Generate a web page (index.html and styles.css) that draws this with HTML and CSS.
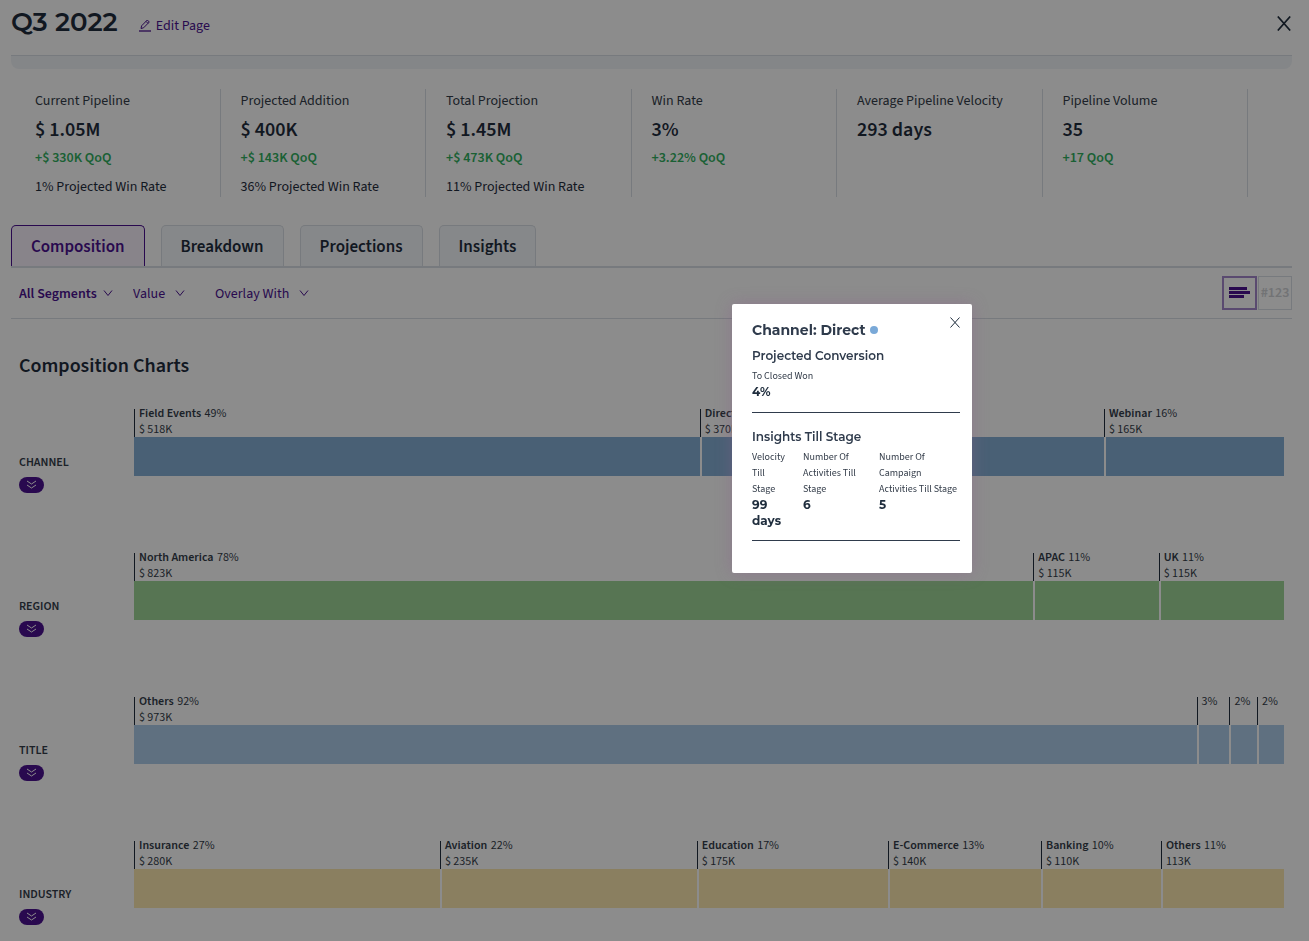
FILE: index.html
```html
<!DOCTYPE html>
<html lang="en">
<head>
    <meta charset="UTF-8">
    <meta name="viewport" content="width=device-width, initial-scale=1.0">
    <title>Q3 2022</title>
    <link rel="stylesheet" href="styles.css">
</head>
<body>
    <div class="page">
        <header class="page-header">
            <h1>Q3 2022</h1>
            <a href="#" class="edit-link">
                <svg width="12" height="13" viewBox="0 0 12 13" fill="none" stroke="currentColor">
                    <path d="M2 9.5l.6-2.7L8.3 1l2 2-5.7 5.8L2 9.5zM7 2.400l2 2"/>
                    <path d="M0 12h12" stroke-width="1.300"/>
                </svg>
                Edit Page
            </a>
            <button type="button" class="close-btn page-close" aria-label="Close page">
                <svg width="14" height="15" viewBox="0 0 14 15" fill="none" stroke="currentColor" stroke-width="1.700"><path d="M.8.5l12.4 14M13.200.5L.8 14.500"/></svg>
            </button>
        </header>
        <div class="header-strip"></div>

        <section class="stats">
            <div class="stat">
                <p class="stat-label">Current Pipeline</p>
                <p class="stat-value">$ 1.05M</p>
                <p class="stat-change">+$ 330K QoQ</p>
                <p class="stat-note">1% Projected Win Rate</p>
            </div>
            <div class="stat">
                <p class="stat-label">Projected Addition</p>
                <p class="stat-value">$ 400K</p>
                <p class="stat-change">+$ 143K QoQ</p>
                <p class="stat-note">36% Projected Win Rate</p>
            </div>
            <div class="stat">
                <p class="stat-label">Total Projection</p>
                <p class="stat-value">$ 1.45M</p>
                <p class="stat-change">+$ 473K QoQ</p>
                <p class="stat-note">11% Projected Win Rate</p>
            </div>
            <div class="stat">
                <p class="stat-label">Win Rate</p>
                <p class="stat-value">3%</p>
                <p class="stat-change">+3.22% QoQ</p>
            </div>
            <div class="stat">
                <p class="stat-label">Average Pipeline Velocity</p>
                <p class="stat-value">293 days</p>
            </div>
            <div class="stat">
                <p class="stat-label">Pipeline Volume</p>
                <p class="stat-value">35</p>
                <p class="stat-change">+17 QoQ</p>
            </div>
        </section>

        <nav class="tabs">
            <button type="button" class="tab active">Composition</button>
            <button type="button" class="tab">Breakdown</button>
            <button type="button" class="tab">Projections</button>
            <button type="button" class="tab">Insights</button>
        </nav>

        <div class="filters">
            <div class="filter filter-main">
                <select aria-label="Segments"><option>All Segments</option></select>
                <svg class="chevron" width="10" height="7" viewBox="0 0 10 7"><path d="M1 .5l4 5 4-5"/></svg>
            </div>
            <div class="filter">
                <select aria-label="Measure"><option>Value</option></select>
                <svg class="chevron" width="10" height="7" viewBox="0 0 10 7"><path d="M1 .5l4 5 4-5"/></svg>
            </div>
            <div class="filter">
                <select aria-label="Overlay"><option>Overlay With</option></select>
                <svg class="chevron" width="10" height="7" viewBox="0 0 10 7"><path d="M1 .5l4 5 4-5"/></svg>
            </div>
            <div class="view-toggle">
                <button type="button" class="toggle-btn selected" aria-label="Bars">
                    <svg width="21" height="12" viewBox="0 0 21 12" fill="currentColor"><path d="M0 0h18v3H0zM0 4h21v3H0zM0 8h15v3H0z"/></svg>
                </button>
                <button type="button" class="toggle-btn">#123</button>
            </div>
        </div>

        <main class="charts">
            <h2>Composition Charts</h2>

            <section class="chart-row channel">
                <div class="chart-side">
                    <h3>CHANNEL</h3>
                    <button type="button" class="expand-btn" aria-label="Expand channel">
                        <svg width="11" height="10" viewBox="0 0 11 10"><path d="M1 1l4.500 3L10 1M1 5l4.500 3L10 5"/></svg>
                    </button>
                </div>
                <div class="chart">
                    <div class="segment" style="width: 49.2%">
                        <div class="segment-label"><b>Field Events</b> 49%<br>$ 518K</div>
                        <div class="bar"></div>
                    </div>
                    <div class="segment" style="width: 35.14%">
                        <div class="segment-label"><b>Direct</b> 35%<br>$ 370K</div>
                        <div class="bar"></div>
                    </div>
                    <div class="segment" style="width: 15.66%">
                        <div class="segment-label"><b>Webinar</b> 16%<br>$ 165K</div>
                        <div class="bar"></div>
                    </div>
                </div>
            </section>

            <section class="chart-row region">
                <div class="chart-side">
                    <h3>REGION</h3>
                    <button type="button" class="expand-btn" aria-label="Expand region">
                        <svg width="11" height="10" viewBox="0 0 11 10"><path d="M1 1l4.500 3L10 1M1 5l4.500 3L10 5"/></svg>
                    </button>
                </div>
                <div class="chart">
                    <div class="segment" style="width: 78.2%">
                        <div class="segment-label"><b>North America</b> 78%<br>$ 823K</div>
                        <div class="bar"></div>
                    </div>
                    <div class="segment" style="width: 10.9%">
                        <div class="segment-label"><b>APAC</b> 11%<br>$ 115K</div>
                        <div class="bar"></div>
                    </div>
                    <div class="segment" style="width: 10.9%">
                        <div class="segment-label"><b>UK</b> 11%<br>$ 115K</div>
                        <div class="bar"></div>
                    </div>
                </div>
            </section>

            <section class="chart-row title">
                <div class="chart-side">
                    <h3>TITLE</h3>
                    <button type="button" class="expand-btn" aria-label="Expand title">
                        <svg width="11" height="10" viewBox="0 0 11 10"><path d="M1 1l4.500 3L10 1M1 5l4.500 3L10 5"/></svg>
                    </button>
                </div>
                <div class="chart">
                    <div class="segment" style="width: 92.4%">
                        <div class="segment-label"><b>Others</b> 92%<br>$ 973K</div>
                        <div class="bar"></div>
                    </div>
                    <div class="segment" style="width: 2.86%">
                        <div class="segment-label">3%</div>
                        <div class="bar"></div>
                    </div>
                    <div class="segment" style="width: 2.4%">
                        <div class="segment-label">2%</div>
                        <div class="bar"></div>
                    </div>
                    <div class="segment" style="width: 2.34%">
                        <div class="segment-label">2%</div>
                        <div class="bar"></div>
                    </div>
                </div>
            </section>

            <section class="chart-row industry">
                <div class="chart-side">
                    <h3>INDUSTRY</h3>
                    <button type="button" class="expand-btn" aria-label="Expand industry">
                        <svg width="11" height="10" viewBox="0 0 11 10"><path d="M1 1l4.500 3L10 1M1 5l4.500 3L10 5"/></svg>
                    </button>
                </div>
                <div class="chart">
                    <div class="segment" style="width: 26.6%">
                        <div class="segment-label"><b>Insurance</b> 27%<br>$ 280K</div>
                        <div class="bar"></div>
                    </div>
                    <div class="segment" style="width: 22.34%">
                        <div class="segment-label"><b>Aviation</b> 22%<br>$ 235K</div>
                        <div class="bar"></div>
                    </div>
                    <div class="segment" style="width: 16.63%">
                        <div class="segment-label"><b>Education</b> 17%<br>$ 175K</div>
                        <div class="bar"></div>
                    </div>
                    <div class="segment" style="width: 13.3%">
                        <div class="segment-label"><b>E-Commerce</b> 13%<br>$ 140K</div>
                        <div class="bar"></div>
                    </div>
                    <div class="segment" style="width: 10.43%">
                        <div class="segment-label"><b>Banking</b> 10%<br>$ 110K</div>
                        <div class="bar"></div>
                    </div>
                    <div class="segment" style="width: 10.7%">
                        <div class="segment-label"><b>Others</b> 11%<br>113K</div>
                        <div class="bar"></div>
                    </div>
                </div>
            </section>
        </main>
    </div>

    <div class="overlay"></div>

    <div class="modal" role="dialog" aria-labelledby="modalTitle">
        <button type="button" class="close-btn modal-close" aria-label="Close">
            <svg width="10" height="11" viewBox="0 0 10 11" fill="none" stroke="currentColor"><path d="M.5.5l9 10M9.500.5l-9 10"/></svg>
        </button>
        <h2 id="modalTitle">Channel: Direct <span class="dot"></span></h2>
        <section class="modal-section">
            <h3>Projected Conversion</h3>
            <p class="metric-label">To Closed Won</p>
            <p class="metric-value">4%</p>
        </section>
        <section class="modal-section">
            <h3>Insights Till Stage</h3>
            <div class="metrics">
                <div>
                    <p class="metric-label">Velocity Till Stage</p>
                    <p class="metric-value">99 days</p>
                </div>
                <div>
                    <p class="metric-label">Number Of Activities Till Stage</p>
                    <p class="metric-value">6</p>
                </div>
                <div>
                    <p class="metric-label">Number Of Campaign Activities Till Stage</p>
                    <p class="metric-value">5</p>
                </div>
            </div>
        </section>
    </div>
</body>
</html>
```
FILE: styles.css
```css
:root {
    --primary: #4b1290;
    --text: #1f2d3d;
    --muted: #333c49;
    --border: #d9dee5;
    --success: #30b060;
    --body-font: 'Source Sans Pro', 'Source Sans 3', 'Noto Sans CJK SC', sans-serif;
    --heading-font: 'Montserrat', 'Inter', sans-serif;
}

* {
    box-sizing: border-box;
    margin: 0;
    padding: 0;
}

body {
    font-family: var(--body-font);
    font-size: 14px;
    line-height: 20px;
    color: var(--text);
    background: #fff;
}

button,
select {
    font: inherit;
    color: inherit;
    background: none;
    border: none;
    cursor: pointer;
}

svg {
    display: block;
}

.page {
    padding: 0 17px 0 11px;
}

/* header */
.page-header {
    display: flex;
    align-items: center;
    gap: 21px;
    height: 56px;
    padding-bottom: 12px;
    border-bottom: 1px solid var(--border);
}

h1 {
    font-family: var(--heading-font);
    font-size: 26px;
    font-weight: 600;
    line-height: 32px;
}

.edit-link {
    display: flex;
    align-items: center;
    gap: 5px;
    padding-top: 8px;
    color: var(--primary);
    text-decoration: none;
}

.page-close {
    margin-left: auto;
    padding: 3px 1px 0 0;
}

.header-strip {
    height: 13px;
    background: #f1f4f8;
    border-radius: 0 0 8px 8px;
}

/* stats */
.stats {
    display: grid;
    grid-template-columns: repeat(6, 1fr);
    margin: 20px 44px 28px 4px;
}

.stat {
    height: 108px;
    padding: 1px 0 0 20px;
    border-right: 1px solid var(--border);
}

.stat-label {
    line-height: 22px;
    color: var(--muted);
}

.stat-value {
    font-size: 20px;
    font-weight: 600;
    line-height: 36px;
}

.stat-change {
    font-weight: 600;
    color: var(--success);
}

.stat-note {
    margin-top: 8px;
    line-height: 22px;
}

/* tabs */
.tabs {
    display: flex;
    gap: 16px;
    border-bottom: 2px solid var(--border);
}

.tab {
    height: 41px;
    padding: 1px 19px 0;
    font-size: 17px;
    font-weight: 600;
    background: #f4f7fb;
    border: 1px solid var(--border);
    border-bottom: none;
    border-radius: 5px 5px 0 0;
}

.tab.active {
    color: var(--primary);
    background: #f8f0fb;
    border-color: var(--primary);
}

/* filters */
.filters {
    display: flex;
    align-items: center;
    gap: 30px;
    height: 51px;
    padding-left: 8px;
    border-bottom: 1px solid var(--border);
    color: var(--primary);
}

.filter {
    display: flex;
    align-items: center;
    gap: 9px;
}

.filter-main {
    gap: 6px;
    margin-right: -10px;
    font-weight: 600;
}

.filter select {
    padding-top: 2px;
    appearance: none;
}

.chevron {
    fill: none;
    stroke: currentColor;
}

.view-toggle {
    display: flex;
    gap: 1px;
    margin-left: auto;
}

.toggle-btn {
    display: flex;
    align-items: center;
    justify-content: center;
    width: 34px;
    height: 34px;
    border: 1px solid var(--border);
    font-weight: 600;
    color: #d0d2d6;
}

.toggle-btn.selected {
    width: 35px;
    color: var(--primary);
    border: 2px solid #a487cc;
}

/* charts */
.charts {
    padding: 31px 8px 16px;
}

.charts h2 {
    margin-bottom: 23px;
    font-size: 20px;
    font-weight: 600;
    line-height: 32px;
}

.chart-row {
    display: flex;
    margin-bottom: 56px;
}

.chart-row:last-child {
    margin-bottom: 0;
}

.chart-side {
    width: 115px;
    padding-top: 49px;
}

.chart-side h3 {
    margin-bottom: 5px;
    font-size: 12px;
    font-weight: 600;
    line-height: 18px;
    color: var(--muted);
}

.expand-btn {
    display: flex;
    align-items: center;
    justify-content: center;
    width: 25px;
    height: 16px;
    border-radius: 8px;
    background: var(--primary);
}

.expand-btn svg {
    fill: none;
    stroke: #fff;
}

.chart {
    display: flex;
    flex: 1;
}

/* tick mark starts a little below the first text line */
.segment-label {
    height: 32px;
    padding: 1px 0 0 5px;
    background: linear-gradient(var(--text), var(--text)) 0 4px / 1px 28px no-repeat;
    font-size: 12px;
    line-height: 16px;
    white-space: nowrap;
    color: var(--muted);
}

.segment-label b {
    margin-right: 1px;
    font-weight: 600;
}

.bar {
    height: 39px;
}

.segment + .segment .bar {
    border-left: 2px solid #fff;
}

.channel .bar {
    background: #86afd6;
}

.region .bar {
    background: #9ed597;
}

.title .bar {
    background: #adcde9;
}

.industry .bar {
    background: #fbe7af;
}

.overlay {
    position: fixed;
    inset: 0;
    background: rgba(0, 0, 0, 0.45);
}

/* details modal */
.modal {
    position: absolute;
    top: 304px;
    left: 732px;
    width: 240px;
    padding: 16px 12px 32px 20px;
    background: #fff;
    border-radius: 2px;
    box-shadow: 0 0 16px rgba(143, 92, 143, 0.4);
    font-family: var(--heading-font);
}

.modal-close {
    position: absolute;
    top: 13px;
    right: 12px;
}

.modal h2 {
    display: flex;
    align-items: center;
    gap: 4px;
    font-size: 14px;
    font-weight: 700;
    line-height: 20px;
    color: #2f3b4c;
}

.dot {
    width: 8px;
    height: 8px;
    border-radius: 50%;
    background: #7aa9d8;
}

.modal-section {
    padding: 6px 0 12px;
    border-bottom: 1px solid #2f3b4c;
}

.modal-section + .modal-section {
    padding: 14px 0 11px;
}

.modal h3 {
    margin-bottom: 2px;
    font-size: 12px;
    font-weight: 600;
    line-height: 20px;
    color: #2f3b4c;
}

.metrics {
    display: grid;
    grid-template-columns: 35px 60px 1fr;
    gap: 16px;
}

.metric-label {
    font-family: var(--body-font);
    font-size: 10px;
    line-height: 16px;
    color: var(--muted);
}

.metric-value {
    font-size: 12px;
    font-weight: 700;
    line-height: 16px;
}
```
